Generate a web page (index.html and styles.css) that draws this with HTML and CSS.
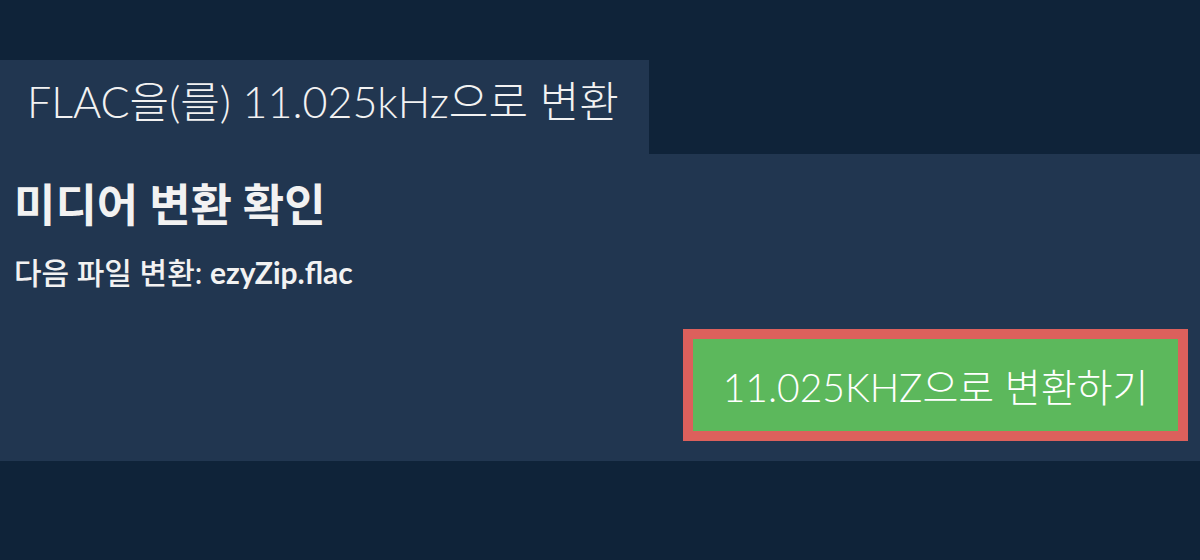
FILE: index.html
```html
<!DOCTYPE html>
<html lang="ko">
<head>
<meta charset="utf-8">
<title>FLAC을(를) 11.025kHz으로 변환</title>
<link rel="stylesheet" href="styles.css">
</head>
<body>
<div class="page">
  <div class="tab">FLAC을(를) 11.025kHz으로 변환</div>
  <section class="panel">
    <h1 class="title">미디어 변환 확인</h1>
    <p class="file">다음 파일 변환: <strong>ezyZip.flac</strong></p>
    <div class="actions">
      <button class="convert">11.025KHZ으로 변환하기</button>
    </div>
  </section>
</div>
</body>
</html>
```

FILE: styles.css
```css
html, body {
  margin: 0;
  padding: 0;
  background: #0f2339;
  font-family: Lato, "Noto Sans CJK KR", sans-serif;
  color: #f2f2f2;
}
.page {
  padding-top: 60px;
}
.tab {
  display: inline-block;
  width: 649px;
  box-sizing: border-box;
  height: 94px;
  line-height: 84px;
  padding-left: 27px;
  font-size: 43px;
  font-weight: 300;
  background: #213650;
  white-space: nowrap;
}
.panel {
  background: #213650;
  padding: 23px 12px 20px 14px;
  height: 307px;
  box-sizing: border-box;
}
.title {
  margin: 0;
  font-size: 45px;
  font-weight: 700;
  line-height: 56px;
}
.file {
  margin: 22px 0 0;
  font-size: 30px;
  font-weight: 500;
  line-height: 34px;
}
.file strong {
  font-weight: 700;
}
.actions {
  display: flex;
  justify-content: flex-end;
  margin-top: 40px;
}
.convert {
  width: 505px;
  height: 112px;
  border: 10px solid #dc605c;
  background: #5cb85c;
  color: #fff;
  font-family: Lato, "Noto Sans CJK KR", sans-serif;
  font-size: 39px;
  font-weight: 300;
  padding: 0;
  cursor: pointer;
}
```
